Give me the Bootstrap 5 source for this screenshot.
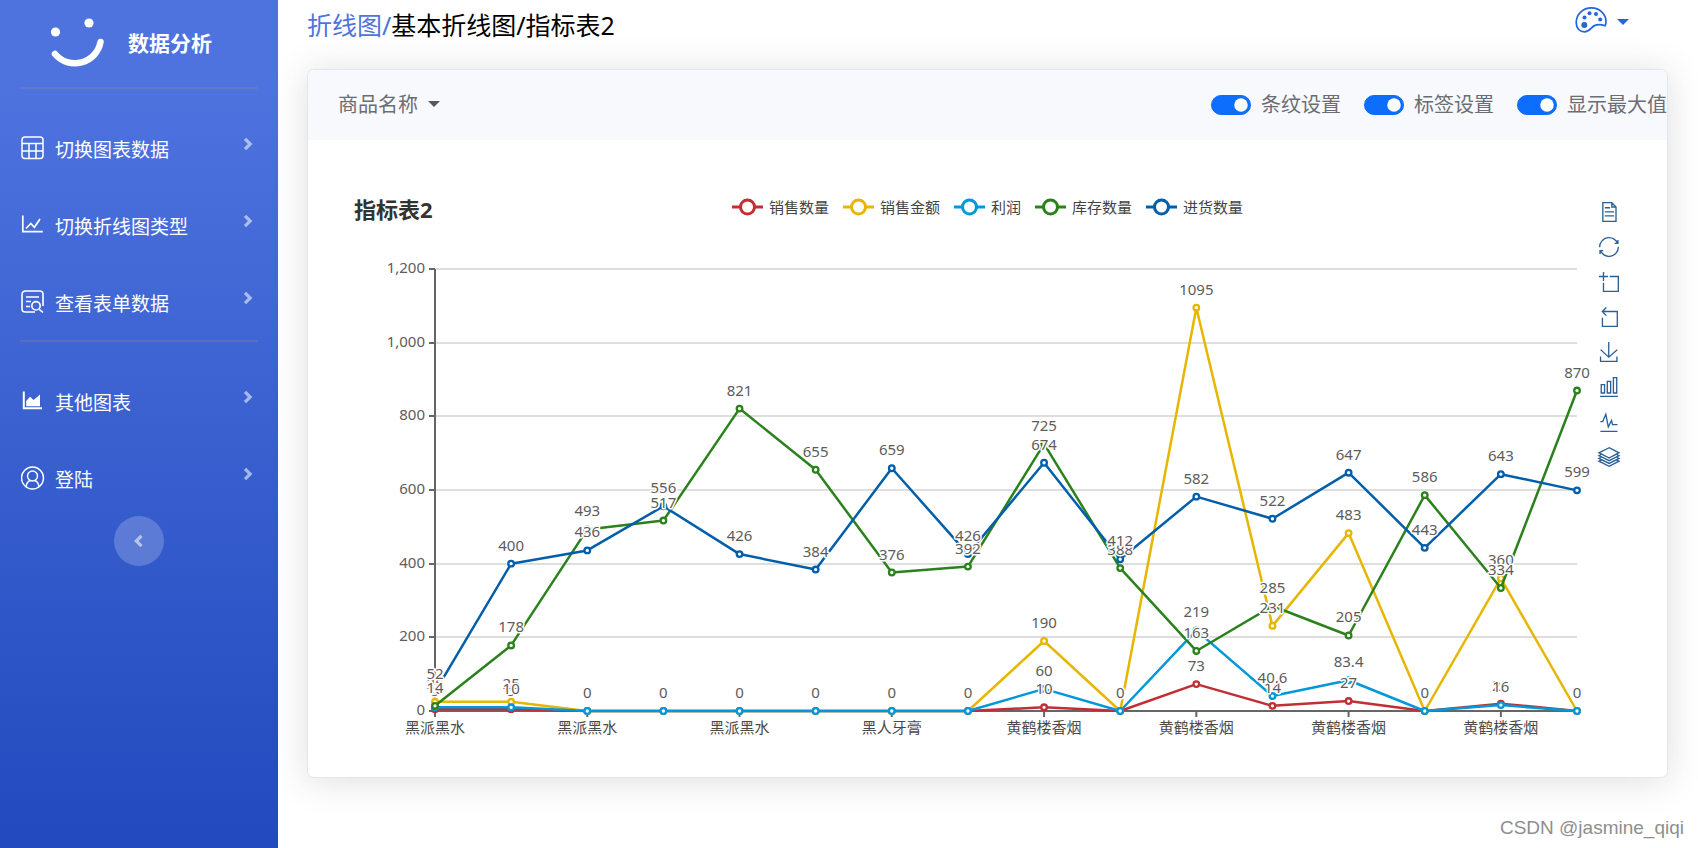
<!DOCTYPE html>
<html lang="zh-CN">
<head>
<meta charset="utf-8">
<meta name="viewport" content="width=device-width, initial-scale=1">
<title>数据分析</title>
<link href="https://cdn.jsdelivr.net/npm/bootstrap@5.3.0/dist/css/bootstrap.min.css" rel="stylesheet">
<style>
  body { font-family: "Noto Sans", "Noto Sans CJK SC", sans-serif; background: #fff; }
  svg { display: block; flex: none; }

  /* sidebar */
  .side-panel { width: 278px; flex: none; background: linear-gradient(180deg, #4e73df 10%, #224abe 100%); }
  .brand { height: 87px; gap: 22px; padding-left: 48px; color: #fff; font-size: 21px; font-weight: 700; }
  .brand:hover { color: #fff; }
  .side-rule { height: 2px; margin: 0 20px 20px; background: rgba(133, 135, 150, .35); }
  .side-link { height: 77px; padding: 0 25px 0 21px; gap: 10px; color: #fff; font-size: 19px; line-height: 28px; text-decoration: none; }
  .side-link:hover { color: #fff; }
  .side-text { padding-top: 4px; }
  .side-arrow { margin-left: auto; padding-bottom: 8px; opacity: .55; }
  .side-toggle { width: 50px; height: 50px; background: rgba(255, 255, 255, .2); }

  /* top bar */
  .page-head { height: 69px; padding: 6px 39px 0 0; }
  .crumbs { font-size: 25px; line-height: 38px; color: #000; }
  .crumbs a { color: #4e73df; text-decoration: none; }
  .theme-btn { padding: 0; color: #1f66e0; gap: 10px; height: 28px; }
  .theme-btn::after { margin: 4px 0 0; border-width: 6px 6px 0; }

  /* chart card */
  .main-col { padding: 0 30px 0 29px; min-width: 0; }
  .chart-card { border-color: #e3e6f0; border-radius: 7px; box-shadow: 0 3px 35px rgba(58, 59, 69, .17); }
  .chart-head { height: 70px; padding: 0 0 0 30px; background: #f8f9fc; border-radius: 6px 6px 0 0; font-size: 20px; color: #6b6d74; }
  .filter-btn { padding: 0; font-size: 20px; line-height: 30px; color: #6b6d74; border: 0; background: none; }
  .filter-btn::after { margin-left: 10px; border-width: 6px 6px 0; color: #55575d; }
  .opts { gap: 23px; }
  .opt { gap: 10px; padding: 0; margin: 0; min-height: 0; line-height: 30px; }
  .opt .form-check-input { width: 40px; height: 20px; margin: 0; float: none; border-color: #0d6efd; }

  .chart-area { display: grid; grid-template-columns: 1fr auto 1fr; grid-template-rows: 26px auto; padding: 56px 46px 38px; }
  .chart-title { font-size: 22px; line-height: 26px; font-weight: 700; color: #333; margin: 0; }
  .legend-list { gap: 14px; font-size: 15px; line-height: 22px; color: #444; align-items: flex-start; }
  .legend-key { gap: 6px; }
  .toolbox { grid-column: 3; grid-row: 1 / span 2; justify-self: end; align-self: start; padding-top: 6px; gap: 15px; width: 22px; }
  .toolbox button { width: 20px; height: 20px; padding: 0; border: 0; background: none; color: #2a6096; }
  .toolbox path { fill: none; stroke: currentColor; stroke-width: 4; }
  .plot { grid-column: 1 / -1; grid-row: 2; width: 100%; height: 517px; }
  .plot text { font-size: 15px; fill: #5c5c5c; }
  .plot .cat { fill: #4a4a4a; }
  .plot .val { stroke: #fff; stroke-width: 3px; stroke-linejoin: round; paint-order: stroke; text-anchor: middle; }

  .credit { font: 19px/28px "Liberation Sans", sans-serif; color: #8e8e8e; margin-right: -16px; padding-bottom: 6px; }
</style>
</head>
<body>
<div class="d-flex min-vh-100">
  <nav class="side-panel" aria-label="主菜单">
    <a href="#" class="brand d-flex align-items-center text-decoration-none">
      <svg width="58" height="52" viewBox="48 17 58 52" overflow="visible" aria-hidden="true">
        <circle cx="55.5" cy="31" r="4.6" fill="#fff"/><circle cx="89" cy="22" r="4.6" fill="#fff"/>
        <path d="M55 53A26 26 0 0 0 100.500 41" fill="none" stroke="#fff" stroke-width="6.500" stroke-linecap="round"/>
      </svg>
      <span>数据分析</span>
    </a>
    <div class="side-rule"></div>
    <a href="#" class="side-link d-flex align-items-center">
      <svg width="24" height="24" viewBox="0 0 24 24" fill="none" stroke="#fff" stroke-width="1.500"><rect x="1" y="1" width="21" height="21.500" rx="3"/><path d="M1 7.500h21M1 15h21M8 7.500v15M15 7.500v15"/></svg>
      <span class="side-text">切换图表数据</span>
      <svg class="side-arrow" width="10" height="22" viewBox="0 0 10 14"><path d="M2 1.800 7.200 7 2 12.200" fill="none" stroke="#fff" stroke-width="3.200"/></svg>
    </a>
    <a href="#" class="side-link d-flex align-items-center">
      <svg width="24" height="24" viewBox="0 0 24 24" fill="none" stroke="#fff" stroke-width="1.700"><path d="M1.800 2.500v16.200h20M5 15.500l4.800-5 3.600 3.800 5.600-8.300"/></svg>
      <span class="side-text">切换折线图类型</span>
      <svg class="side-arrow" width="10" height="22" viewBox="0 0 10 14"><path d="M2 1.800 7.200 7 2 12.200" fill="none" stroke="#fff" stroke-width="3.200"/></svg>
    </a>
    <a href="#" class="side-link d-flex align-items-center">
      <svg width="24" height="24" viewBox="0 0 24 24" fill="none" stroke="#fff" stroke-width="1.600"><path d="M14 22H4.300A3.300 3.300 0 0 1 1 18.700V4.300A3.300 3.300 0 0 1 4.300 1h14.400A3.300 3.300 0 0 1 22 4.300V16M5 7h13M5 11.500h5M5 16.500h4M18.300 19.300l3.700 3.200"/><circle cx="15" cy="15.800" r="4.200"/></svg>
      <span class="side-text">查看表单数据</span>
      <svg class="side-arrow" width="10" height="22" viewBox="0 0 10 14"><path d="M2 1.800 7.200 7 2 12.200" fill="none" stroke="#fff" stroke-width="3.200"/></svg>
    </a>
    <div class="side-rule"></div>
    <a href="#" class="side-link d-flex align-items-center">
      <svg width="24" height="24" viewBox="0 0 24 24"><path d="M2.800 2.500v16.800H21" fill="none" stroke="#fff" stroke-width="2"/><path d="M5.200 17.300V12L9 7.700l3.600 3.300L19 5.500v11.800z" fill="#fff"/></svg>
      <span class="side-text">其他图表</span>
      <svg class="side-arrow" width="10" height="22" viewBox="0 0 10 14"><path d="M2 1.800 7.200 7 2 12.200" fill="none" stroke="#fff" stroke-width="3.200"/></svg>
    </a>
    <a href="#" class="side-link d-flex align-items-center">
      <svg width="24" height="24" viewBox="0 0 24 24" fill="none" stroke="#fff" stroke-width="1.400"><circle cx="11.500" cy="12" r="11"/><circle cx="11.500" cy="10" r="5"/><path d="M5 20.500c.6-3.400 2.400-5.400 4.300-6M18 20.500c-.6-3.400-2.400-5.400-4.300-6"/></svg>
      <span class="side-text">登陆</span>
      <svg class="side-arrow" width="10" height="22" viewBox="0 0 10 14"><path d="M2 1.800 7.200 7 2 12.200" fill="none" stroke="#fff" stroke-width="3.200"/></svg>
    </a>
    <button type="button" class="side-toggle btn rounded-circle border-0 p-0 mx-auto d-flex align-items-center justify-content-center" aria-label="收起菜单">
      <svg width="10" height="14" viewBox="0 0 10 14" opacity=".55"><path d="M7.500 1.800 2.300 7 7.500 12.200" fill="none" stroke="#fff" stroke-width="3.200"/></svg>
    </button>
  </nav>

  <main class="main-col flex-grow-1 d-flex flex-column">
    <header class="page-head d-flex justify-content-between align-items-start">
      <div class="crumbs"><a href="#">折线图/</a>基本折线图/指标表2</div>
      <button type="button" class="theme-btn btn border-0 dropdown-toggle d-flex align-items-center" aria-label="主题颜色">
        <svg width="32" height="26" viewBox="0 0 32 26"><path d="M9.500 24.800C4.500 24.800 1.200 21 1.200 15.500 1.200 7 8 .9 16.500 .9S31 7.500 31 14.500c0 1.800-.2 3-.8 4.200-3-.9-7-1.600-10.200-.3C16.200 19.900 14.500 24.800 9.500 24.800z" fill="none" stroke="currentColor" stroke-width="1.700"/><g fill="currentColor"><circle cx="9.300" cy="18" r="3"/><circle cx="9.500" cy="10.500" r="2"/><circle cx="14.500" cy="6.300" r="2"/><circle cx="21" cy="7" r="2"/><circle cx="25.200" cy="12.500" r="2"/></g></svg>
      </button>
    </header>

    <section class="card chart-card">
      <div class="chart-head d-flex align-items-center justify-content-between">
        <button type="button" class="filter-btn dropdown-toggle">商品名称</button>
        <div class="opts d-flex">
          <div class="opt form-check form-switch d-flex align-items-center"><input class="form-check-input" type="checkbox" role="switch" id="stripe" checked><label for="stripe">条纹设置</label></div>
          <div class="opt form-check form-switch d-flex align-items-center"><input class="form-check-input" type="checkbox" role="switch" id="label" checked><label for="label">标签设置</label></div>
          <div class="opt form-check form-switch d-flex align-items-center"><input class="form-check-input" type="checkbox" role="switch" id="max" checked><label for="max">显示最大值</label></div>
        </div>
      </div>
      <div class="chart-area">
        <h2 class="chart-title">指标表2</h2>
        <div class="legend-list d-flex" id="legend"></div>
        <svg class="plot" id="plot" role="img" aria-label="指标表2"></svg>
        <div class="toolbox d-flex flex-column" id="toolbox"></div>
      </div>
    </section>

    <footer class="credit text-end mt-auto">CSDN @jasmine_qiqi</footer>
  </main>
</div>

<script src="https://cdn.jsdelivr.net/npm/bootstrap@5.3.0/dist/js/bootstrap.bundle.min.js"></script>
<script>
const series = [
  { name: '销售数量', color: '#c12e34', data: [5, 5, 0, 0, 0, 0, 0, 0, 10, 0, 73, 14, 27, 0, 20, 0] },
  { name: '销售金额', color: '#e6b600', data: [25, 25, 0, 0, 0, 0, 0, 0, 190, 0, 1095, 231, 483, 0, 360, 0] },
  { name: '利润', color: '#0098d9', data: [10, 10, 0, 0, 0, 0, 0, 0, 60, 0, 219, 40.6, 83.4, 0, 16, 0] },
  { name: '库存数量', color: '#2b821d', data: [14, 178, 493, 517, 821, 655, 376, 392, 725, 388, 163, 285, 205, 586, 334, 870] },
  { name: '进货数量', color: '#005eaa', data: [52, 400, 436, 556, 426, 384, 659, 426, 674, 412, 582, 522, 647, 443, 643, 599] }
];
const categories = ['黑派黑水', '黑派黑水', '黑派黑水', '黑人牙膏', '黄鹤楼香烟', '黄鹤楼香烟', '黄鹤楼香烟', '黄鹤楼香烟'];
const tools = [
  ['数据视图', 'M17.5,17.3H33 M45.4,29.5h-28 M11.5,2v56H51V14.8L38.4,2H11.5z M38.4,2.2v12.7H51 M45.4,41.7h-28'],
  ['还原', 'M47,18.9h9.8V8.7 M56.3,20.1C52.1,9,40.5,0.6,26.8,2.1C12.6,3.7,1.6,16.2,2.1,30.6 M13,41.1H3.1v10.2 M3.7,39.9c4.2,11.1,15.8,19.5,29.5,18c14.2-1.6,25.2-14.1,24.7-28.5'],
  ['区域缩放', 'M0,13.5h26.9 M13.5,26.9V0 M32.1,13.5H58V58H13.5V32.1'],
  ['缩放还原', 'M22,1.4L9.9,13.5l12.3,12.3 M10.3,13.5H54.9v44.6H10.3v-26'],
  ['保存图片', 'M4.7,22.9L29.3,45.5L54.7,23.4 M4.6,43.6V58H53.8V43.6 M29.2,45.1V0'],
  ['柱状图', 'M6.7,22.9h10V48h-10z M24.9,13h10v35h-10z M43.2,2h10v46h-10z M3.1,58h53.7'],
  ['折线图', 'M4.1,28.9h7.1l9.3-22l7.4,38l9.7-19.7l3,12.8h14.9 M4.1,58h51.4'],
  ['堆叠', 'M8.2,38.4l-8.4,4.1l30.6,15.3L60,42.5l-8.1-4.1l-21.5,11L8.2,38.4z M51.9,30l-8.1,4.2l-13.4,6.9l-13.9-6.9L8.2,30l-8.4,4.2l8.4,4.2l22.2,11l21.5-11l8.1-4.2L51.9,30z M51.9,21.7l-8.1,4.2L35.7,30l-5.3,2.8L24.9,30l-8.4-4.1l-8.3-4.2l-8.4,4.2L8.2,30l8.3,4.2l13.9,6.9l13.4-6.9l8.1-4.2l8.1-4.1L51.9,21.7z M30.4,2.2L-0.2,17.5l8.4,4.1l8.3,4.2l8.4,4.2l5.5,2.7l5.3-2.7l8.1-4.2l8.1-4.2l8.1-4.1L30.4,2.2z']
];

document.getElementById('legend').innerHTML = series.map(s =>
  `<span class="legend-key d-flex align-items-center"><svg width="31" height="18"><path d="M0 9H31" stroke="${s.color}" stroke-width="3"/><circle cx="15.500" cy="9" r="7" fill="#fff" stroke="${s.color}" stroke-width="3"/></svg>${s.name}</span>`).join('');
document.getElementById('toolbox').innerHTML = tools.map(([name, d]) =>
  `<button type="button" aria-label="${name}"><svg width="20" height="20" viewBox="0 0 60 60" overflow="visible"><path d="${d}"/></svg></button>`).join('');

const plot = document.getElementById('plot');
function draw() {
  const left = 81, right = plot.clientWidth - 44, top = 47, bottom = 489;
  const x = i => left + (right - left) * i / 15;
  const y = v => bottom - (bottom - top) * v / 1200;
  let out = '';
  for (let v = 0; v <= 1200; v += 200) {
    const gy = Math.round(y(v));
    if (v) out += `<path d="M${left} ${gy}H${right}" stroke="#dedede" stroke-width="2"/>`;
    out += `<path d="M${left - 6} ${gy}H${left}" stroke="#666" stroke-width="2"/>`;
    out += `<text x="${left - 10}" y="${gy + 4}" text-anchor="end">${v.toLocaleString('en-US')}</text>`;
  }
  out += `<path d="M${left} ${top}V${bottom}H${right}" fill="none" stroke="#666" stroke-width="2"/>`;
  categories.forEach((c, i) => {
    out += `<path d="M${x(i * 2)} ${bottom}v6" stroke="#666" stroke-width="2"/><text class="cat" x="${x(i * 2)}" y="${bottom + 22}" text-anchor="middle">${c}</text>`;
  });
  series.forEach(s => {
    out += `<polyline points="${s.data.map((v, i) => x(i) + ',' + y(v)).join(' ')}" fill="none" stroke="${s.color}" stroke-width="2.500" stroke-linejoin="bevel"/>`;
    s.data.forEach((v, i) => { out += `<circle cx="${x(i)}" cy="${y(v)}" r="2.800" fill="#fff" stroke="${s.color}" stroke-width="2.300"/>`; });
  });
  series.forEach(s => s.data.forEach((v, i) => { out += `<text class="val" x="${x(i)}" y="${y(v) - 13}">${v}</text>`; }));
  plot.innerHTML = out;
}
draw();
window.addEventListener('resize', draw);
</script>
</body>
</html>
